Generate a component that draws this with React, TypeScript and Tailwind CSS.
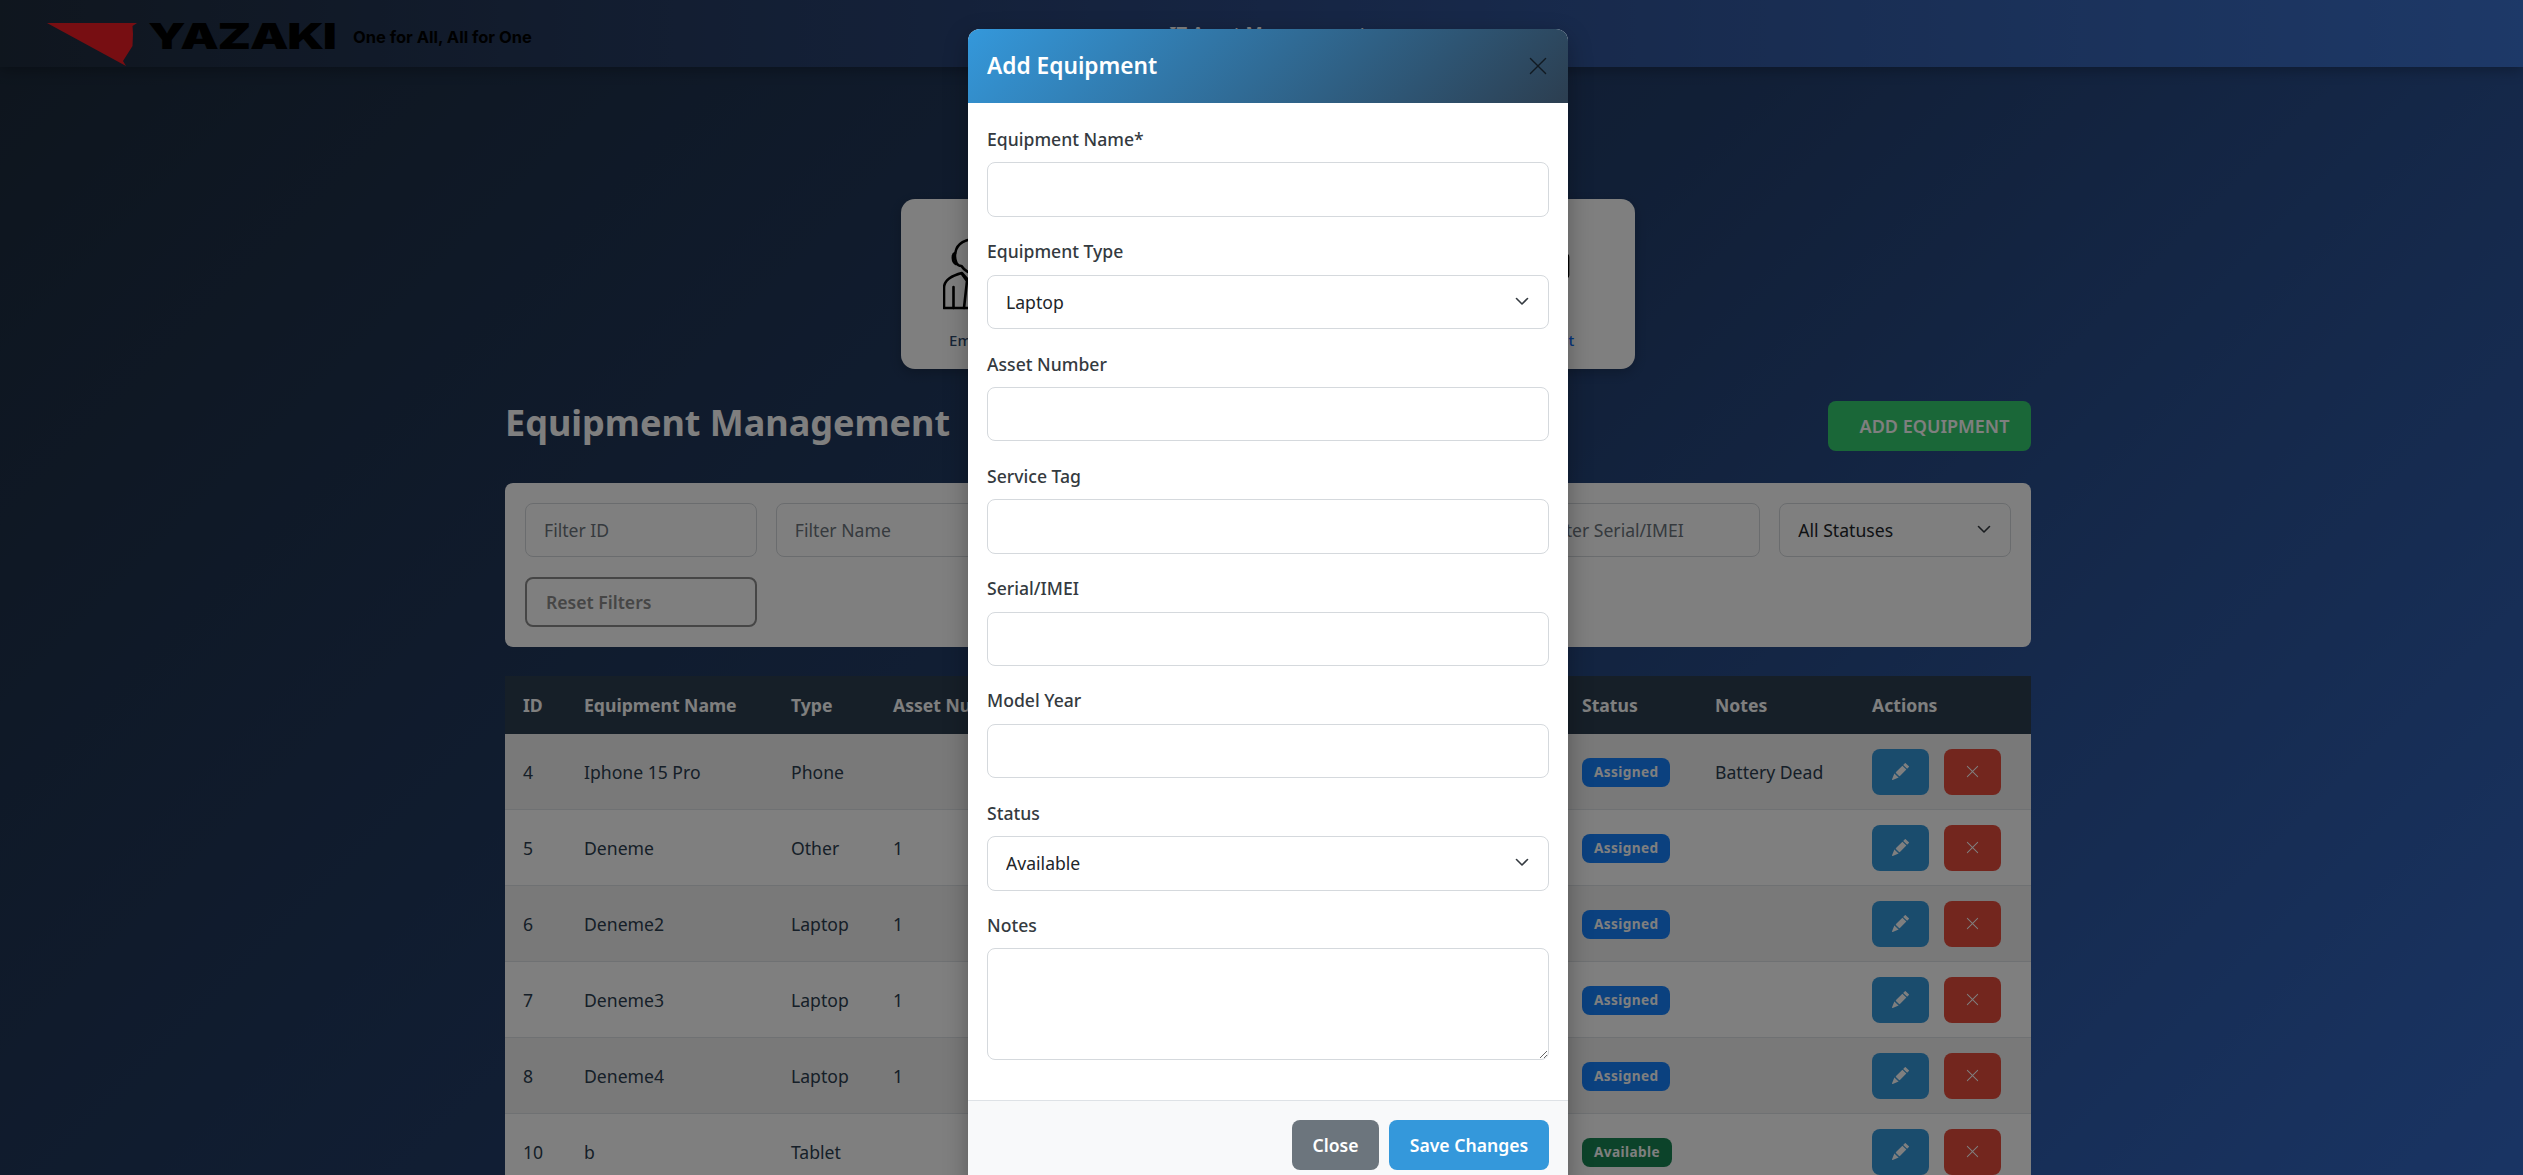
import { BsPencilFill, BsXLg } from "react-icons/bs";

type Row = {
  id: number;
  name: string;
  type: string;
  asset: string;
  status: "Assigned" | "Available";
  notes: string;
};

const rows: Row[] = [
  { id: 4, name: "Iphone 15 Pro", type: "Phone", asset: "", status: "Assigned", notes: "Battery Dead" },
  { id: 5, name: "Deneme", type: "Other", asset: "1", status: "Assigned", notes: "" },
  { id: 6, name: "Deneme2", type: "Laptop", asset: "1", status: "Assigned", notes: "" },
  { id: 7, name: "Deneme3", type: "Laptop", asset: "1", status: "Assigned", notes: "" },
  { id: 8, name: "Deneme4", type: "Laptop", asset: "1", status: "Assigned", notes: "" },
  { id: 10, name: "b", type: "Tablet", asset: "", status: "Available", notes: "" },
];

const fieldClass =
  "w-full h-[54.4px] rounded-[8px] border border-[#d5d9dd] bg-white px-[18px] text-[17.6px] text-[#212529] outline-none placeholder:text-[#6c757d]";

function Chevron() {
  return (
    <svg
      className="pointer-events-none absolute right-[19px] top-[18px] h-[16px] w-[16px]"
      viewBox="0 0 16 16"
      fill="none"
      stroke="#343a40"
      strokeWidth="1.6"
      strokeLinecap="round"
      strokeLinejoin="round"
    >
      <path d="M2.5 5.5 8 11l5.5-5.5" />
    </svg>
  );
}

function SelectBox({ value, options }: { value: string; options: string[] }) {
  return (
    <div className="relative">
      <select defaultValue={value} className={`${fieldClass} appearance-none`}>
        {options.map((o) => (
          <option key={o}>{o}</option>
        ))}
      </select>
      <Chevron />
    </div>
  );
}

function Field({ label, children }: { label: string; children: React.ReactNode }) {
  return (
    <div className="mb-[21.5px]">
      <label className="mb-[10px] block text-[17.6px] font-medium leading-[26.4px] text-[#343a40]">{label}</label>
      {children}
    </div>
  );
}

function Logo() {
  return (
    <div className="mt-[22px] flex items-center">
      <svg className="h-[46px] w-[92px]" viewBox="0 0 92 46">
        <path d="M0 1H90L85.5 4 86 12 85.5 24 76 39 79 44Z" fill="#ee1c25" />
      </svg>
      <span className="ml-[9px] mt-[-19px] inline-block w-[186px] origin-left scale-x-[1.35] font-['Inter',sans-serif] text-[36px] font-black leading-none tracking-[-1px] text-black">
        YAZAKI
      </span>
      <span className="ml-[19px] mt-[-15px] font-['Inter',sans-serif] text-[16.5px] font-bold text-black">
        One for All, All for One
      </span>
    </div>
  );
}

function PersonIcon() {
  return (
    <svg className="h-[72px] w-[72px]" viewBox="0 0 72 72" fill="none" stroke="#000" strokeWidth="2.6" strokeLinecap="round" strokeLinejoin="round">
      <path d="M36 1C22 0 14 6 12.5 14c-1 4-.5 8 1 11 1 2 3 3 5 3 3 5 9 8 14 8" />
      <path d="M12 15c-3 1-3 9 1 11" />
      <path d="M1 70V50c0-7 6-12 18-15l8 9 9 4 9-4 8-9c12 3 18 8 18 15v20Z" />
      <path d="M10.5 49v21M61.5 49v21M19 36l5 7-3 27M53 36l-5 7 3 27" />
    </svg>
  );
}

function DeviceIcon() {
  return (
    <svg className="h-[72px] w-[72px]" viewBox="0 0 72 72" fill="none" stroke="#000" strokeWidth="2.6" strokeLinejoin="round">
      <rect x="8" y="16" width="61" height="24" rx="3" />
    </svg>
  );
}

function Badge({ status }: { status: Row["status"] }) {
  return (
    <span
      className={`inline-flex h-[29px] items-center rounded-[8px] px-[12px] text-[13.6px] font-bold tracking-[0.4px] text-white ${
        status === "Assigned" ? "bg-[#1683ff]" : "bg-[#198754]"
      }`}
    >
      {status}
    </span>
  );
}

export default function App() {
  return (
    <div className="relative h-screen overflow-hidden bg-[linear-gradient(135deg,#1c2a3a_0%,#233f6e_50%,#3369c8_100%)] font-['Noto_Sans',sans-serif]">
      {/* page behind the dialog */}
      <header className="relative grid h-[67px] grid-cols-[1fr_auto_1fr] items-center bg-[linear-gradient(90deg,#1f2c3d_0%,#2c4a86_50%,#3b72d0_100%)] pl-[47px] shadow-[0_4px_12px_rgba(0,0,0,0.25)]">
        <Logo />
        <h1 className="mb-[3px] mr-[34px] text-[18.5px] font-semibold text-white">IT Asset Management</h1>
        <div />
      </header>

      <div className="pl-[13px]">
        <main className="mx-auto mt-[132px] w-[1526px]">
          <nav className="mx-auto flex h-[170px] w-[734px] justify-between rounded-[14px] bg-white pl-[42px] pr-[64px] pt-[39px] shadow-[0_4px_12px_rgba(0,0,0,0.2)]">
            <a className="flex w-[72px] flex-col items-center">
              <PersonIcon />
              <span className="ml-[10px] mt-[19px] text-[15px] font-medium text-[#2c4a6e]">Employee</span>
            </a>
            <a className="flex w-[72px] flex-col items-center">
              <DeviceIcon />
              <span className="mt-[19px] text-[15px] font-medium text-[#0d6efd]">Equipment</span>
            </a>
          </nav>

          <div className="mt-[32px] flex h-[50px] items-center justify-between">
            <h2 className="pb-[6px] text-[36px] font-bold text-white">Equipment Management</h2>
            <button className="h-[50px] w-[203px] rounded-[8px] bg-[#35cf70] pl-[30px] pr-[20px] text-[18px] font-semibold text-white">
              ADD EQUIPMENT
            </button>
          </div>

          <section className="mt-[32px] rounded-[8px] bg-white p-[20px]">
            <div className="grid grid-cols-6 gap-x-[19.2px] gap-y-[19.6px]">
              <input placeholder="Filter ID" className={fieldClass} />
              <input placeholder="Filter Name" className={fieldClass} />
              <SelectBox value="All Types" options={["All Types"]} />
              <input placeholder="Filter Asset Number" className={fieldClass} />
              <input placeholder="Filter Serial/IMEI" className={fieldClass} />
              <SelectBox value="All Statuses" options={["All Statuses"]} />
              <button className="h-[50px] rounded-[8px] border-2 border-[#8c8c8c] pl-[19px] text-left text-[17.6px] font-semibold text-[#8c8c8c]">
                Reset Filters
              </button>
            </div>
          </section>

          <table className="mt-[29px] w-full table-fixed border-collapse bg-white text-[17.6px] text-[#2c3e50]">
            <colgroup>
              <col className="w-[61px]" />
              <col className="w-[207px]" />
              <col className="w-[102px]" />
              <col className="w-[172px]" />
              <col className="w-[172px]" />
              <col className="w-[172px]" />
              <col className="w-[173px]" />
              <col className="w-[133px]" />
              <col className="w-[157px]" />
              <col className="w-[177px]" />
            </colgroup>
            <thead>
              <tr className="h-[58px] bg-[#2c3e50] text-left font-bold text-white">
                {["ID", "Equipment Name", "Type", "Asset Number", "Service Tag", "Serial/IMEI", "Model Year", "Status", "Notes", "Actions"].map((h) => (
                  <th key={h} className="truncate px-[18px] font-bold">
                    {h}
                  </th>
                ))}
              </tr>
            </thead>
            <tbody>
              {rows.map((r, i) => (
                <tr key={r.id} className={`h-[76px] border-b border-[#dee2e6] ${i % 2 === 0 ? "bg-[#f2f2f2]" : "bg-white"}`}>
                  <td className="px-[18px]">{r.id}</td>
                  <td className="px-[18px]">{r.name}</td>
                  <td className="px-[18px]">{r.type}</td>
                  <td className="px-[18px]">{r.asset}</td>
                  <td />
                  <td />
                  <td />
                  <td className="px-[18px]">
                    <Badge status={r.status} />
                  </td>
                  <td className="px-[18px]">{r.notes}</td>
                  <td className="px-[18px]">
                    <div className="flex gap-[15px]">
                      <button className="flex h-[46px] w-[57px] items-center justify-center rounded-[8px] bg-[#3498db] text-white">
                        <BsPencilFill className="h-[17px] w-[17px]" />
                      </button>
                      <button className="flex h-[46px] w-[57px] items-center justify-center rounded-[8px] bg-[#e74c3c] text-white">
                        <BsXLg className="h-[15px] w-[15px]" />
                      </button>
                    </div>
                  </td>
                </tr>
              ))}
            </tbody>
          </table>
        </main>
      </div>

      {/* modal backdrop and dialog */}
      <div className="absolute inset-0 flex items-start justify-center bg-black/50 pl-[13px]">
        <div className="mt-[29px] w-[600px] shrink-0 overflow-hidden rounded-[12px] bg-white shadow-[0_8px_24px_rgba(0,0,0,0.3)]">
          <div className="flex h-[74px] items-center justify-between bg-[linear-gradient(135deg,#3498db,#2c3e50)] px-[19px]">
            <h3 className="text-[22.7px] font-semibold text-white">Add Equipment</h3>
            <BsXLg className="h-[22px] w-[22px] text-[#111a22]" />
          </div>
          <div className="px-[19px] pb-[18.5px] pt-[23px]">
            <Field label="Equipment Name*">
              <input className={fieldClass} />
            </Field>
            <Field label="Equipment Type">
              <SelectBox value="Laptop" options={["Laptop", "Phone", "Tablet", "Other"]} />
            </Field>
            <Field label="Asset Number">
              <input className={fieldClass} />
            </Field>
            <Field label="Service Tag">
              <input className={fieldClass} />
            </Field>
            <Field label="Serial/IMEI">
              <input className={fieldClass} />
            </Field>
            <Field label="Model Year">
              <input className={fieldClass} />
            </Field>
            <Field label="Status">
              <SelectBox value="Available" options={["Available", "Assigned"]} />
            </Field>
            <Field label="Notes">
              <textarea className="block h-[112px] w-full resize-y rounded-[8px] border border-[#d5d9dd] bg-white px-[18px] py-[12px] text-[17.6px] outline-none" />
            </Field>
          </div>
          <div className="flex justify-end gap-[10px] border-t border-[#dee2e6] bg-[#f8f9fa] px-[19px] pb-[19px] pt-[19px]">
            <button className="h-[50px] w-[87px] rounded-[8px] bg-[#6c757d] text-[17.6px] font-semibold text-white">Close</button>
            <button className="h-[50px] w-[160px] rounded-[8px] bg-[#3498db] text-[17.6px] font-semibold text-white">Save Changes</button>
          </div>
        </div>
      </div>
    </div>
  );
}
